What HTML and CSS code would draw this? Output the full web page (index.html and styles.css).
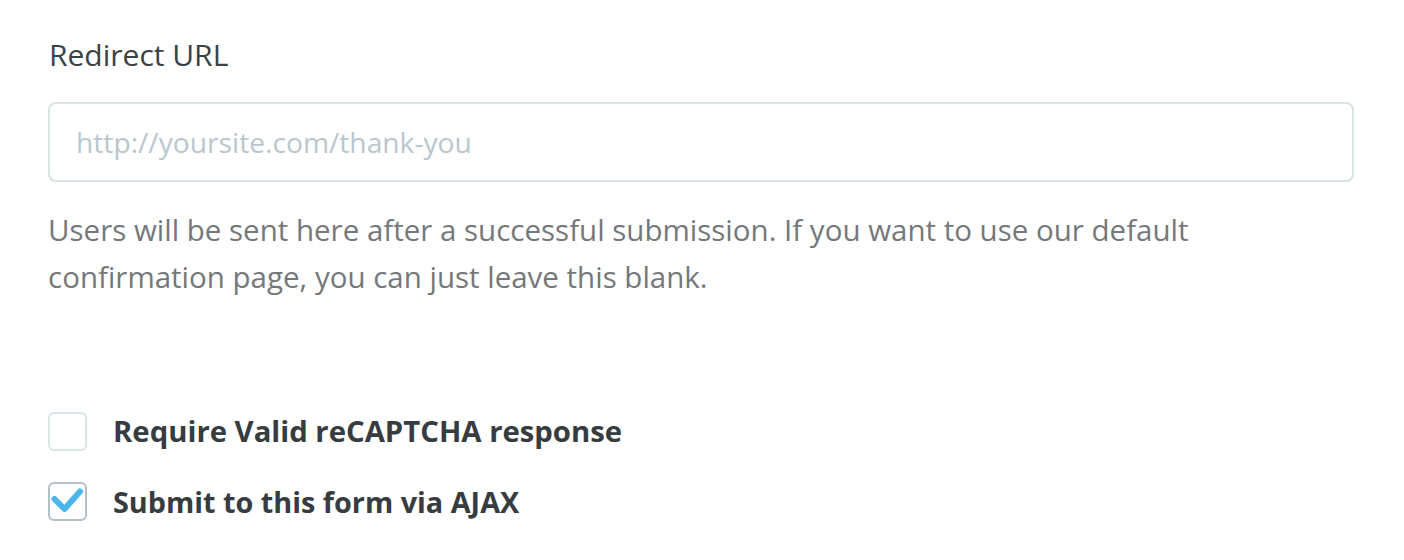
FILE: index.html
```html
<!DOCTYPE html>
<html>
<head>
<meta charset="utf-8">
<link rel="stylesheet" href="styles.css">
</head>
<body>
<div class="form">
  <div class="field">
    <label class="label">Redirect URL</label>
    <div class="input"><span class="placeholder">http://yoursite.com/thank-you</span></div>
    <p class="help">Users will be sent here after a successful submission. If you want to use our default<br>confirmation page, you can just leave this blank.</p>
  </div>
  <div class="checks">
    <div class="check-row">
      <span class="box"></span>
      <span class="check-label">Require Valid reCAPTCHA response</span>
    </div>
    <div class="check-row">
      <span class="box checked">
        <svg width="35" height="35" viewBox="0 0 35 35"><path d="M4.5 15 L14.5 25 L30 7.5" fill="none" stroke="#4ab6ec" stroke-width="6" stroke-linecap="round" stroke-linejoin="round"/></svg>
      </span>
      <span class="check-label">Submit to this form via AJAX</span>
    </div>
  </div>
</div>
</body>
</html>
```
FILE: styles.css
```css
html, body {
  margin: 0;
  padding: 0;
  background: #ffffff;
}
body {
  font-family: "Open Sans", "Liberation Sans", sans-serif;
}
.form {
  padding: 37px 50px 0 48px;
}
.field {
  display: flex;
  flex-direction: column;
}
.label {
  font-size: 30px;
  color: #3a4246;
  line-height: 36px;
  padding-left: 1px;
}
.input {
  margin-top: 29px;
  height: 76px;
  border: 2px solid #d9e3e6;
  border-radius: 8px;
  display: flex;
  align-items: center;
  padding-left: 26px;
}
.placeholder {
  font-size: 28.2px;
  color: #b9c7ce;
}
.help {
  margin: 24px 0 0 0;
  font-size: 29.5px;
  line-height: 47px;
  color: #75787a;
}
.checks {
  margin-top: 111px;
  display: flex;
  flex-direction: column;
  gap: 31px;
}
.check-row {
  display: flex;
  align-items: center;
  gap: 26px;
}
.box {
  width: 35px;
  height: 35px;
  border: 2px solid #dbe4e7;
  border-radius: 6px;
  display: flex;
  align-items: center;
  justify-content: center;
  flex-shrink: 0;
}
.box.checked {
  border-color: #b3c0c6;
}
.box svg {
  flex-shrink: 0;
  display: block;
}
.check-label {
  font-size: 29.3px;
  font-weight: 700;
  color: #363c40;
}
.check-row + .check-row .check-label {
  font-size: 28.8px;
}
```
